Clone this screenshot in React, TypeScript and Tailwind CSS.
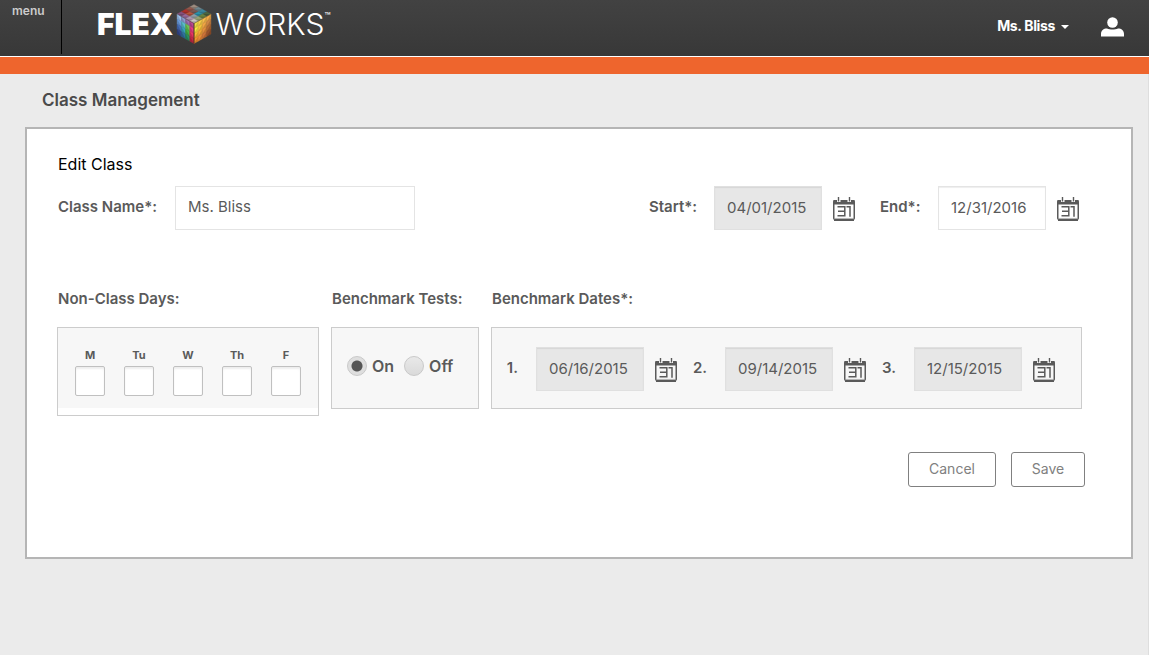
import { useId, useState } from "react";

type Point = [number, number];

type Face = { origin: Point; u: Point; v: Point; cells: string[][] };

// Each face is a parallelogram; cells are listed row by row along v, then along u.
const faces: Face[] = [
  {
    origin: [18, 0.5],
    u: [17, 9.5],
    v: [-17, 9.5],
    cells: [
      ["#9c8c80", "#6f8790", "#3a87a0", "#4a6440"],
      ["#94584c", "#7c5a54", "#2a92ac", "#6a8440"],
      ["#b0302a", "#b5543c", "#8f9ea6", "#98a474"],
      ["#86507c", "#9a689a", "#b098b0", "#cbc3bf"],
    ],
  },
  {
    origin: [1, 10],
    u: [17, 9.5],
    v: [0, 20],
    cells: [
      ["#9cc0ec", "#8c9cd0", "#9c70b0", "#bc4894"],
      ["#6a9cdc", "#58bccc", "#6cc454", "#e83c84"],
      ["#466eb8", "#3aa0bc", "#48b044", "#e83464"],
      ["#34488c", "#30709c", "#289060", "#c42844"],
    ],
  },
  {
    origin: [18, 19.5],
    u: [17, -9.5],
    v: [0, 20],
    cells: [
      ["#f6e044", "#fad048", "#f8bc4c", "#f0aa48"],
      ["#fce840", "#f8c43c", "#f0a444", "#d08644"],
      ["#fabc34", "#f4a838", "#e48e3c", "#b46a34"],
      ["#f49430", "#ec8c38", "#cc7238", "#98522c"],
    ],
  },
];

function CubeLogo() {
  return (
    <svg viewBox="0 0 36 40" className="h-10 w-9 shrink-0" aria-hidden="true">
      {faces.map((face, f) =>
        face.cells.map((row, r) =>
          row.map((color, c) => {
            const at = (i: number, j: number) =>
              [
                face.origin[0] + (face.u[0] * i) / 4 + (face.v[0] * j) / 4,
                face.origin[1] + (face.u[1] * i) / 4 + (face.v[1] * j) / 4,
              ].join(",");
            const shade = f === 1 ? [at(c, r), at(c + 1, r + 1), at(c, r + 1)] : [at(c, r + 1), at(c + 1, r), at(c + 1, r + 1)];
            return (
              <g key={`${f}-${r}-${c}`}>
                <polygon
                  points={[at(c, r), at(c + 1, r), at(c + 1, r + 1), at(c, r + 1)].join(" ")}
                  fill={color}
                  stroke={color}
                  strokeWidth="0.3"
                />
                <polygon points={shade.join(" ")} fill="#000" opacity="0.16" />
              </g>
            );
          }),
        ),
      )}
      <path d="M1 10 18 19.5 35 10" fill="none" stroke="#4a403c" strokeWidth="0.5" />
      <path d="M18 19.5v20" fill="none" stroke="#2b2320" strokeWidth="0.9" />
    </svg>
  );
}

function CalendarIcon() {
  return (
    <svg viewBox="0 0 22 24" className="block h-6 w-[22px]" aria-hidden="true">
      <path d="M0.5 3h21v4.5h-21z" fill="#5a5a5a" />
      <rect x="0.75" y="3.75" width="20.5" height="18.5" rx="1" fill="none" stroke="#5a5a5a" strokeWidth="1.5" />
      <path d="M1 23.25h20" stroke="#5a5a5a" strokeWidth="1.5" />
      <path d="M1.5 21.4h19" stroke="#bdbdbd" strokeWidth="0.7" />
      <path d="M4 2h3.5v3H4zM14.5 2h3.5v3h-3.5z" fill="#fff" />
      <path d="M5.5 0v4.5M16.5 0v4.5" fill="none" stroke="#5a5a5a" strokeWidth="1.4" />
      <path d="M4.5 9.7h7.3v9H4.500M5 14.200h6.500M13.500 9.700h3.500v10" fill="none" stroke="#5a5a5a" strokeWidth="1.5" />
    </svg>
  );
}

function DateField({ label, value, locked, id }: { label: string; value: string; locked?: boolean; id: string }) {
  return (
    <div className="flex items-center gap-[11px]">
      <input
        id={id}
        type="text"
        defaultValue={value}
        readOnly={locked}
        className={
          locked
            ? "h-11 w-[108px] border border-[#e0e0e0] bg-[#e7e7e7] px-3 pb-[2px] text-[15px] text-[#5a5a5a] shadow-[inset_0_1px_1px_#d6d6d6] outline-none"
            : "h-11 w-[108px] border border-[#e4e4e4] bg-white px-3 pb-[2px] text-[15px] text-[#5a5a5a] shadow-[inset_0_1px_1px_#eeeeee] outline-none"
        }
      />
      <button type="button" aria-label={`Choose ${label}`} className="pt-[2px]">
        <CalendarIcon />
      </button>
    </div>
  );
}

const days = ["M", "Tu", "W", "Th", "F"];

const benchmarks = ["06/16/2015", "09/14/2015", "12/15/2015"];

const radioClass =
  "h-5 w-5 appearance-none rounded-full border border-[#c9c9c9] bg-linear-to-b from-[#e9e9e9] to-[#dadada] checked:bg-[radial-gradient(circle,#555_0,#555_5px,#dedede_6px)]";

export default function App() {
  const uid = useId();
  const [benchmarkOn, setBenchmarkOn] = useState(true);

  return (
    <div className="flex min-h-screen flex-col bg-[#ebebeb] font-['Inter','Liberation_Sans',sans-serif] text-[#5a5a5a]">
      <header className="flex h-14 items-start bg-linear-to-b from-[#424242] to-[#383838] text-white">
        <button
          type="button"
          className="flex h-[54px] w-[62px] items-start border-r border-black pt-[3px] pl-3 text-xs leading-4 font-semibold text-[#cccccc]"
        >
          menu
        </button>
        <a href="#" aria-label="FlexWorks" className="flex h-12 items-center pl-[35px]">
          <span className="text-[30px] leading-none font-black">FLEX</span>
          <span className="mx-[3px]">
            <CubeLogo />
          </span>
          <span className="text-[30px] leading-none font-light">WORKS</span>
          <span className="mb-4 text-[10px] leading-none">™</span>
        </a>
        <div className="ml-auto flex h-[52px] items-center gap-8 pr-[25px]">
          <button type="button" className="flex items-center gap-[6px] text-sm font-bold tracking-tight">
            Ms. Bliss
            <svg viewBox="0 0 8 4" className="mt-[2px] h-1 w-2" aria-hidden="true">
              <path d="M0 0h8L4 4z" fill="#fff" />
            </svg>
          </button>
          <button type="button" aria-label="Account" className="pt-[2px]">
            <svg viewBox="0 0 23 20" className="h-5 w-[23px]" aria-hidden="true">
              <circle cx="11.5" cy="5.5" r="5.3" fill="#fff" />
              <path d="M0 19.5v-2.5c0-3.5 2.5-5.5 6-5.5 3 1.3 8 1.3 11 0 3.5 0 6 2 6 5.5v2.5z" fill="#fff" />
            </svg>
          </button>
        </div>
      </header>
      <div className="h-[18px] border-t border-white bg-[#ee652d]" />

      <main className="flex-1 border-r border-[#dedede] pr-[15px] pb-8 pl-[25px]">
        <h1 className="px-[17px] pt-[14px] pb-[15px] text-[17px] leading-6 font-semibold text-[#4a4a4a]">Class Management</h1>

        <form
          onSubmit={(event) => event.preventDefault()}
          className="border-2 border-[#b5b5b5] bg-white pt-[23px] pr-[46px] pb-[70px] pl-[30px]"
        >
          <h2 className="pl-px text-base leading-6 text-black">Edit Class</h2>

          <div className="mt-[10px] flex items-center pr-[6px] pl-px">
            <label htmlFor={`${uid}-name`} className="w-[117px] pb-[2px] text-[15px] leading-6 font-semibold">
              Class Name*:
            </label>
            <input
              id={`${uid}-name`}
              type="text"
              defaultValue="Ms. Bliss"
              className="h-11 w-60 border border-[#e4e4e4] bg-white px-3 pb-[3px] text-[15px] text-[#5a5a5a] outline-none"
            />
            <div className="ml-auto flex items-center">
              <label htmlFor={`${uid}-start`} className="w-[65px] pb-[2px] text-[15px] leading-6 font-semibold">
                Start*:
              </label>
              <DateField id={`${uid}-start`} label="start date" value="04/01/2015" locked />
              <label htmlFor={`${uid}-end`} className="ml-[25px] w-[58px] pb-[2px] text-[15px] leading-6 font-semibold">
                End*:
              </label>
              <DateField id={`${uid}-end`} label="end date" value="12/31/2016" />
            </div>
          </div>

          <div className="mt-[58px] flex items-start gap-3 pr-[3px]">
            <fieldset className="w-[262px]">
              <legend className="pl-px text-[15px] leading-[22px] font-semibold">Non-Class Days:</legend>
              <div className="mt-[17px] border border-[#cccccc] bg-white pb-[7px]">
                <div className="flex h-20 justify-between bg-[#f7f7f7] px-[17px] pt-5">
                  {days.map((day) => (
                    <label key={day} className="flex flex-col items-center gap-[3px] text-[11px] leading-[15px] font-bold">
                      {day}
                      <input
                        type="checkbox"
                        className="h-[30px] w-[30px] appearance-none rounded-[2px] border border-[#c0c0c0] bg-white shadow-[inset_0_2px_2px_#eeeeee] checked:bg-[#5a5a5a]"
                      />
                    </label>
                  ))}
                </div>
              </div>
            </fieldset>

            <fieldset className="w-[148px]">
              <legend className="pl-px text-[15px] leading-[22px] font-semibold whitespace-nowrap">Benchmark Tests:</legend>
              <div className="mt-[17px] flex h-[82px] items-center gap-[10px] border border-[#cccccc] bg-[#f7f7f7] pb-1 pl-[15px]">
                <label className="flex items-center gap-[5px] text-base font-semibold">
                  <input
                    type="radio"
                    name={`${uid}-tests`}
                    checked={benchmarkOn}
                    onChange={() => setBenchmarkOn(true)}
                    className={radioClass}
                  />
                  On
                </label>
                <label className="flex items-center gap-[5px] text-base font-semibold">
                  <input
                    type="radio"
                    name={`${uid}-tests`}
                    checked={!benchmarkOn}
                    onChange={() => setBenchmarkOn(false)}
                    className={radioClass}
                  />
                  Off
                </label>
              </div>
            </fieldset>

            <fieldset className="flex-1">
              <legend className="pl-px text-[15px] leading-[22px] font-semibold">Benchmark Dates*:</legend>
              <div className="mt-[17px] flex h-[82px] items-center gap-4 border border-[#cccccc] bg-[#f7f7f7] pt-[2px] pl-3">
                {benchmarks.map((date, index) => (
                  <div key={date} className="flex items-center gap-[18px]">
                    <label
                      htmlFor={`${uid}-date-${index}`}
                      className="w-[14px] pb-[2px] text-right text-[15px] font-semibold"
                    >
                      {index + 1}.
                    </label>
                    <DateField id={`${uid}-date-${index}`} label={`benchmark date ${index + 1}`} value={date} locked />
                  </div>
                ))}
              </div>
            </fieldset>
          </div>

          <div className="mt-9 flex justify-end gap-[15px]">
            <button
              type="button"
              className="h-[35px] w-[88px] rounded-[3px] border border-[#808080] bg-white pb-[2px] text-sm text-[#808080]"
            >
              Cancel
            </button>
            <button
              type="submit"
              className="h-[35px] w-[74px] rounded-[3px] border border-[#808080] bg-white pb-[2px] text-sm text-[#808080]"
            >
              Save
            </button>
          </div>
        </form>
      </main>
    </div>
  );
}
